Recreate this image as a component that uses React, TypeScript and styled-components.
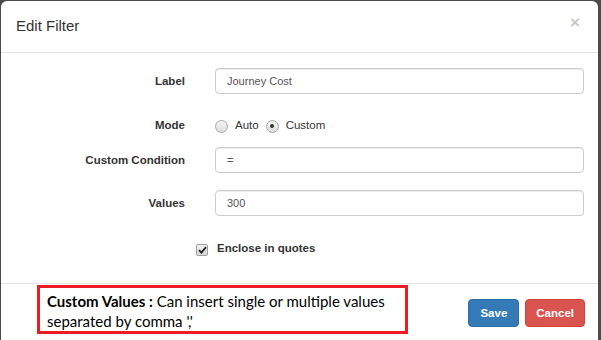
import React from 'react';
import styled, { createGlobalStyle } from 'styled-components';

const GlobalStyle = createGlobalStyle`
  html, body {
    margin: 0;
    padding: 0;
    background: #4b4b4b;
  }
  body {
    font-family: "Liberation Sans", Arial, sans-serif;
    color: #333;
  }
`;

const Backdrop = styled.div`
  width: 601px;
  height: 340px;
  box-sizing: border-box;
  padding: 1px 3px 0 1px;
  overflow: hidden;
`;

const Modal = styled.div`
  background: #fff;
  border-radius: 6px 6px 0 0;
  height: 339px;
  display: flex;
  flex-direction: column;
`;

const Header = styled.div`
  height: 51px;
  border-bottom: 1px solid #e5e5e5;
  display: flex;
  align-items: center;
  justify-content: space-between;
  padding: 0 18px 0 15px;
`;

const Title = styled.h4`
  margin: 0 0 2px;
  font-size: 15px;
  font-weight: normal;
  color: #333;
`;

const Close = styled.button`
  border: 0;
  background: none;
  padding: 0;
  margin-top: -8px;
  font-family: "Liberation Sans", Arial, sans-serif;
  font-size: 17px;
  font-weight: bold;
  color: #c8c8c8;
  line-height: 1;
  cursor: pointer;
`;

const Body = styled.div`
  height: 230px;
  box-sizing: border-box;
  padding: 15px 14px 0 0;
`;

const FormRow = styled.div<{ $top: number; $h?: number }>`
  display: grid;
  grid-template-columns: 184px 1fr;
  column-gap: 30px;
  align-items: center;
  margin-top: ${({ $top }) => $top}px;
  height: ${({ $h }) => $h ?? 26}px;
`;

const Label = styled.label`
  text-align: right;
  font-size: 11.5px;
  font-weight: bold;
  color: #333;
`;

const Input = styled.input`
  height: 26px;
  box-sizing: border-box;
  border: 1px solid #ccc;
  border-radius: 4px;
  box-shadow: inset 0 1px 1px rgba(0, 0, 0, 0.075);
  padding: 0 11px;
  font-family: "Liberation Sans", Arial, sans-serif;
  font-size: 11px;
  color: #555;
  outline: none;
`;

const Radios = styled.div`
  display: flex;
  align-items: center;
  font-size: 11.5px;
  color: #333;
`;

const RadioOption = styled.span`
  display: inline-flex;
  align-items: center;
  gap: 7px;
  margin-right: 7px;
`;

const RadioDot = styled.span<{ $on?: boolean }>`
  width: 11px;
  height: 11px;
  border-radius: 50%;
  border: 1px solid #a9a9a9;
  background: linear-gradient(#f4f4f4, #dcdcdc);
  display: inline-flex;
  align-items: center;
  justify-content: center;
  margin-top: 2px;
  &::after {
    content: '';
    width: 4px;
    height: 4px;
    border-radius: 50%;
    background: ${({ $on }) => ($on ? '#333' : 'transparent')};
  }
`;

const CheckRow = styled.div`
  display: flex;
  align-items: center;
  gap: 9px;
  padding-left: 195px;
  margin-top: 20px;
  height: 24px;
  font-size: 11.5px;
  font-weight: bold;
`;

const CheckBox = styled.span`
  width: 10px;
  height: 10px;
  border: 1px solid #a0a0a0;
  border-radius: 2px;
  background: linear-gradient(#f2f2f2, #d8d8d8);
  display: inline-flex;
  align-items: center;
  justify-content: center;
  margin-top: 3px;
`;

const Footer = styled.div`
  border-top: 1px solid #e5e5e5;
  display: flex;
  align-items: flex-start;
  padding: 1px 13px 0 36px;
  flex: 1;
`;

const Hint = styled.div`
  width: 371px;
  height: 49px;
  box-sizing: border-box;
  border: 3px solid #ec1c24;
  padding: 3px 7px 0;
  font-family: Lato, "Open Sans", sans-serif;
  font-size: 15px;
  line-height: 20px;
  color: #000;
  white-space: nowrap;
  b {
    font-weight: bold;
  }
`;

const Actions = styled.div`
  margin-left: auto;
  margin-top: 14px;
  display: flex;
  gap: 6px;
`;

const Button = styled.button<{ $variant: 'primary' | 'danger' }>`
  height: 28px;
  box-sizing: border-box;
  padding: 0 ${({ $variant }) => ($variant === 'primary' ? 11 : 10)}px;
  border-radius: 4px;
  border: 1px solid ${({ $variant }) => ($variant === 'primary' ? '#2e6da4' : '#d43f3a')};
  background: ${({ $variant }) => ($variant === 'primary' ? '#337ab7' : '#d9534f')};
  color: #fff;
  font-family: "Liberation Sans", Arial, sans-serif;
  font-size: 11.5px;
  font-weight: bold;
`;

export default function App() {
  return (
    <>
      <GlobalStyle />
      <Backdrop>
        <Modal>
          <Header>
            <Title>Edit Filter</Title>
            <Close aria-label="Close">×</Close>
          </Header>
          <Body>
            <FormRow $top={0}>
              <Label>Label</Label>
              <Input defaultValue="Journey Cost" />
            </FormRow>
            <FormRow $top={18}>
              <Label>Mode</Label>
              <Radios>
                <RadioOption>
                  <RadioDot />
                  Auto
                </RadioOption>
                <RadioOption>
                  <RadioDot $on />
                  Custom
                </RadioOption>
              </Radios>
            </FormRow>
            <FormRow $top={9}>
              <Label>Custom Condition</Label>
              <Input defaultValue="=" />
            </FormRow>
            <FormRow $top={17}>
              <Label>Values</Label>
              <Input defaultValue="300" />
            </FormRow>
            <CheckRow>
              <CheckBox>
                <svg width="9" height="8" viewBox="0 0 9 8">
                  <path d="M1 4.2 L3.4 6.6 L8 1.2" fill="none" stroke="#222" strokeWidth="1.8" />
                </svg>
              </CheckBox>
              Enclose in quotes
            </CheckRow>
          </Body>
          <Footer>
            <Hint>
              <b>Custom Values :</b> Can insert single or multiple values
              <br />
              separated by comma ','
            </Hint>
            <Actions>
              <Button $variant="primary">Save</Button>
              <Button $variant="danger">Cancel</Button>
            </Actions>
          </Footer>
        </Modal>
      </Backdrop>
    </>
  );
}
